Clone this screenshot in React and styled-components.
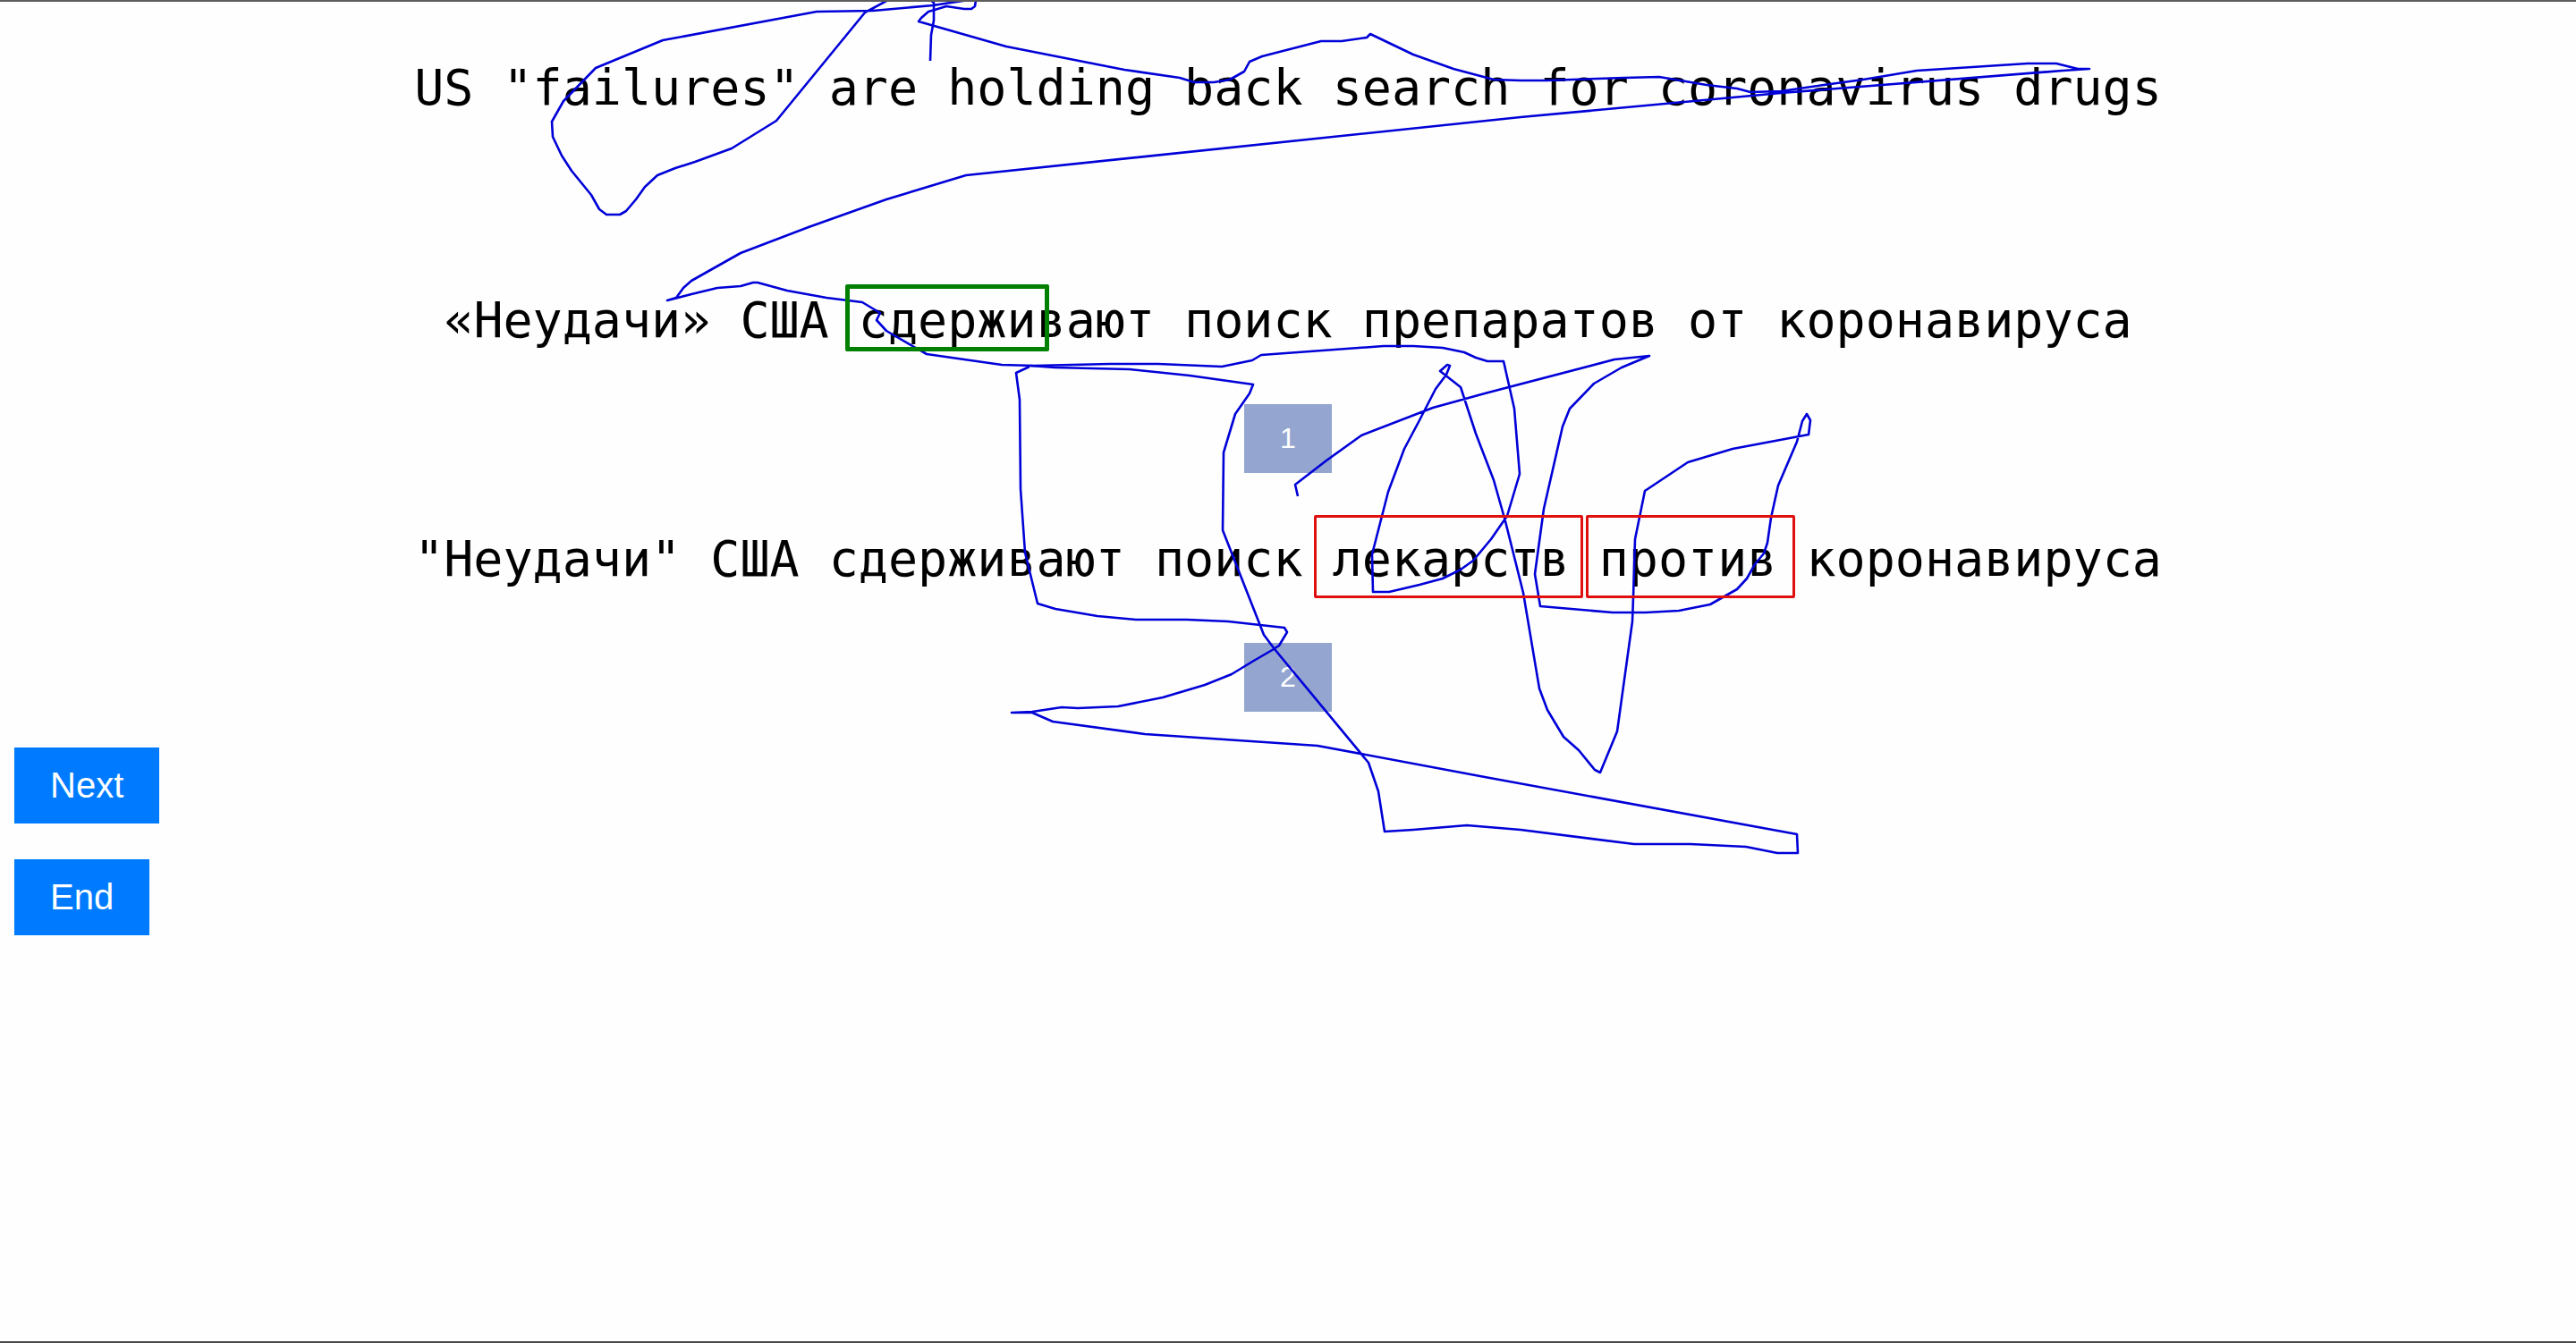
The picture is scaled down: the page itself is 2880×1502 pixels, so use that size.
import React from "react";
import styled, { createGlobalStyle } from "styled-components";

const GlobalStyle = createGlobalStyle`
  body {
    margin: 0;
    background: #fefefe;
    color: #000;
    font-family: "Liberation Sans", Arial, sans-serif;
  }
`;

const Page = styled.main`
  position: relative;
  box-sizing: border-box;
  min-height: 100vh;
  padding: 65px 16px 0;
  border-top: 2px solid #5e5c5d;
  border-bottom: 2px solid #48484a;
  overflow: hidden;
`;

const Source = styled.section`
  margin-bottom: 198px;
`;

const Candidates = styled.section`
  display: grid;
  gap: 65px;
`;

const Candidate = styled.div`
  display: flex;
  flex-direction: column;
  align-items: center;
  gap: 63px;
`;

const Sentence = styled.p`
  margin: 0;
  font-family: "DejaVu Sans Mono", monospace;
  font-size: 55px;
  line-height: 62px;
  text-align: center;
`;

const Mark = styled.mark`
  position: relative;
  background: none;
  color: inherit;

  &::after {
    content: "";
    position: absolute;
    z-index: 2;
    inset: ${(p) => p.$inset};
    border: ${(p) => p.$border};
    border-radius: 2px;
    pointer-events: none;
  }
`;

const Rank = styled.button`
  border: 0;
  padding: 20px 40px;
  background: #94a6d0;
  color: #fff;
  font: 32px/37px "Liberation Sans", Arial, sans-serif;
`;

const Actions = styled.nav`
  display: flex;
  flex-direction: column;
  align-items: flex-start;
  gap: 40px;
  margin-top: 40px;
`;

const Action = styled.button`
  border: 0;
  padding: 20px 40px;
  background: #007bff;
  color: #fff;
  font: 40px/45px "Liberation Sans", Arial, sans-serif;
`;

const Ink = styled.svg`
  position: absolute;
  z-index: 1;
  top: -2px;
  left: 0;
  width: 100%;
  aspect-ratio: 2880 / 1502;
  pointer-events: none;
  fill: none;
  stroke: #0000d8;
  stroke-width: 2.6;
  stroke-linejoin: round;
`;

const strokes = [
  "1040,68 1041,39 1044,23 1044,3 1040,0",
  "1083,0 1043,6 976,12 913,13 741,45 666,76 630,113 617,136 618,153 628,174 639,191 661,218 670,234 678,240 693,240 700,236 711,223 721,209 735,196 755,188 777,181 818,166 868,135 967,14 993,0",
  "1091,0 1090,7 1086,10 1078,10 1058,7 1045,11 1038,13 1030,20 1027,24 1125,52 1257,78 1319,87 1335,92 1357,92 1375,89 1391,80 1397,69 1411,63 1477,46 1500,46 1528,42 1532,38 1580,61 1625,77 1670,89 1700,90 1729,90 1816,87 1855,86 1908,95 1942,99 1957,103 1991,102 2039,95 2083,89 2143,79 2267,71 2299,71 2323,77 2336,77 2306,79 1991,104 1700,131 1080,196 991,223 904,254 828,283 773,314 764,322 756,333 746,336 773,329 802,322 828,320 842,316 847,316 880,325 924,333 964,338 984,350 980,358 991,370 1022,388 1036,396 1120,408 1156,409 1241,407 1295,407 1366,410 1400,403 1410,397 1547,387 1580,387 1613,389 1637,394 1650,400 1663,404 1681,404 1693,457 1699,530 1685,577 1667,603 1647,627 1633,637 1613,647 1587,654 1553,662 1535,662 1534,620 1552,550 1570,502 1587,470 1605,435 1617,419 1621,409 1618,408 1610,415 1633,433 1650,485 1670,537 1683,583 1703,663 1721,770 1730,794 1748,824 1765,839 1783,861 1789,864 1808,818 1825,695 1826,668 1828,603 1839,549 1887,517 1937,502 2022,486 2024,470 2020,463 2015,471 2009,494 1988,543 1980,579 1976,607 1972,619 1962,631 1953,647 1942,659 1912,676 1877,683 1840,685 1803,685 1722,678 1716,642 1726,569 1747,477 1755,457 1782,429 1813,411 1844,398 1805,402 1660,440 1602,456 1522,487 1483,515 1448,542 1451,555",
  "1152,409 1179,411 1263,413 1330,420 1401,430 1397,440 1381,463 1368,506 1367,593 1413,710 1425,726 1530,853 1541,885 1548,930 1580,928 1640,923 1700,928 1827,944 1890,944 1952,947 1987,954 2010,954 2009,933 1660,869 1473,834 1280,821 1177,807 1154,797 1131,797 1154,796 1187,791 1205,792 1250,790 1300,780 1347,766 1377,754 1400,740 1424,726 1430,722 1439,707 1436,702 1373,695 1327,693 1270,693 1227,689 1180,681 1160,675 1146,618 1141,547 1140,447 1136,417 1151,410",
];

const GREEN = "5px solid #008000";
const RED = "3px solid #e01010";

export default function App() {
  return (
    <>
      <GlobalStyle />
      <Page>
        <Source>
          <Sentence lang="en">
            US "failures" are holding back search for coronavirus drugs
          </Sentence>
        </Source>
        <Candidates>
          <Candidate>
            <Sentence lang="ru">
              «Неудачи» США{" "}
              <Mark $inset="-8px -14px -3px -15px" $border={GREEN}>
                сдержи
              </Mark>
              вают поиск препаратов от коронавируса
            </Sentence>
            <Rank type="button">1</Rank>
          </Candidate>
          <Candidate>
            <Sentence lang="ru">
              "Неудачи" США сдерживают поиск{" "}
              <Mark $inset="-17px -15px -12px -21px" $border={RED}>
                лекарств
              </Mark>{" "}
              <Mark $inset="-17px -21px -12px -15px" $border={RED}>
                против
              </Mark>{" "}
              коронавируса
            </Sentence>
            <Rank type="button">2</Rank>
          </Candidate>
        </Candidates>
        <Actions>
          <Action type="button">Next</Action>
          <Action type="button">End</Action>
        </Actions>
        <Ink viewBox="0 0 2880 1502" aria-hidden="true">
          {strokes.map((points) => (
            <polyline key={points} points={points} />
          ))}
        </Ink>
      </Page>
    </>
  );
}
